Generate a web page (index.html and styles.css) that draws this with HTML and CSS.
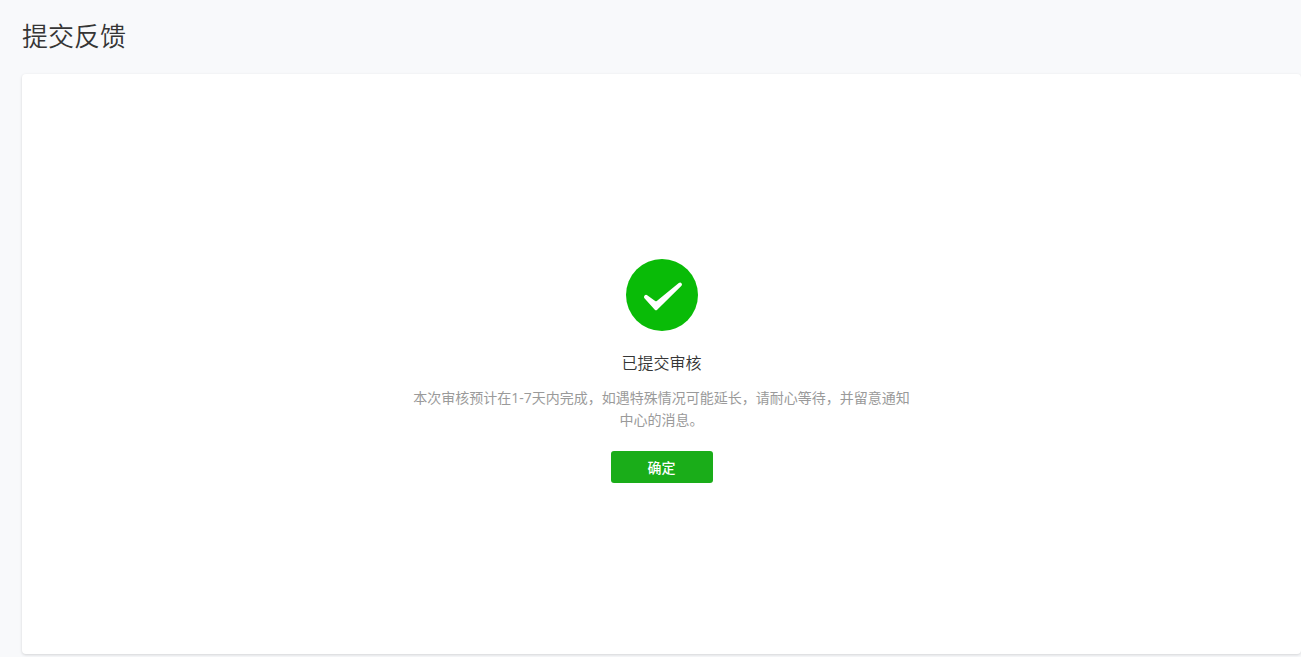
FILE: index.html
```html
<!DOCTYPE html>
<html lang="zh-CN">

    <head>
        <meta charset="UTF-8">
        <meta name="viewport" content="width=device-width, initial-scale=1.0">
        <title>提交反馈</title>
        <link rel="stylesheet" href="styles.css">
    </head>

    <body>
        <main class="page">
            <h1 class="page-title">提交反馈</h1>
            <section class="card">
                <svg class="result-icon" viewBox="0 0 72 72" aria-hidden="true">
                    <circle cx="36" cy="36" r="36" fill="#09bb07" />
                    <path fill="#fff" d="M18.2 39Q17.5 37.6 18.6 36.4Q19.9 35.3 21.2 36.2L29.2 42.1Q30 42.6 30.8 42L52.8 24.1Q54.3 23.1 55.5 24.2Q56.5 25.5 55.5 26.7L31.2 50.7Q30 51.9 28.8 50.7Z" />
                </svg>
                <h2 class="result-title">已提交审核</h2>
                <p class="result-desc">本次审核预计在1-7天内完成，如遇特殊情况可能延长，请耐心等待，并留意通知中心的消息。</p>
                <button type="button" class="btn">确定</button>
            </section>
        </main>
    </body>

</html>
```
FILE: styles.css
```css
* {
    box-sizing: border-box;
}

body {
    margin: 0;
    font-family: "Open Sans", "Noto Sans CJK SC", sans-serif;
    background-color: #f8f9fb;
    color: #353535;
}

.page {
    display: flex;
    flex-direction: column;
    min-height: 100vh;
    padding: 16px 0 3px 22px;
}

.page-title {
    margin: 0 0 18px;
    font-size: 26px;
    line-height: 40px;
    font-weight: 350;
}

.card {
    flex: 1;
    display: flex;
    flex-direction: column;
    align-items: center;
    justify-content: center;
    padding: 24px 24px 10px;
    background: #fff;
    border-radius: 4px;
    box-shadow: 0 1px 3px rgba(0, 0, 0, 0.15);
}

.result-icon {
    width: 72px;
    height: 72px;
}

.result-title {
    margin: 20px 0 12px;
    font-size: 16px;
    line-height: 24px;
    font-weight: 350;
}

.result-desc {
    max-width: 508px;
    margin: 0 0 20px;
    color: #9a9a9a;
    font-size: 14px;
    line-height: 22px;
    text-align: center;
}

.btn {
    min-width: 102px;
    height: 32px;
    padding: 0 20px;
    border: none;
    border-radius: 3px;
    background-color: #1aad19;
    color: #fff;
    font-family: inherit;
    font-size: 14px;
    font-weight: 500;
    cursor: pointer;
}
```
